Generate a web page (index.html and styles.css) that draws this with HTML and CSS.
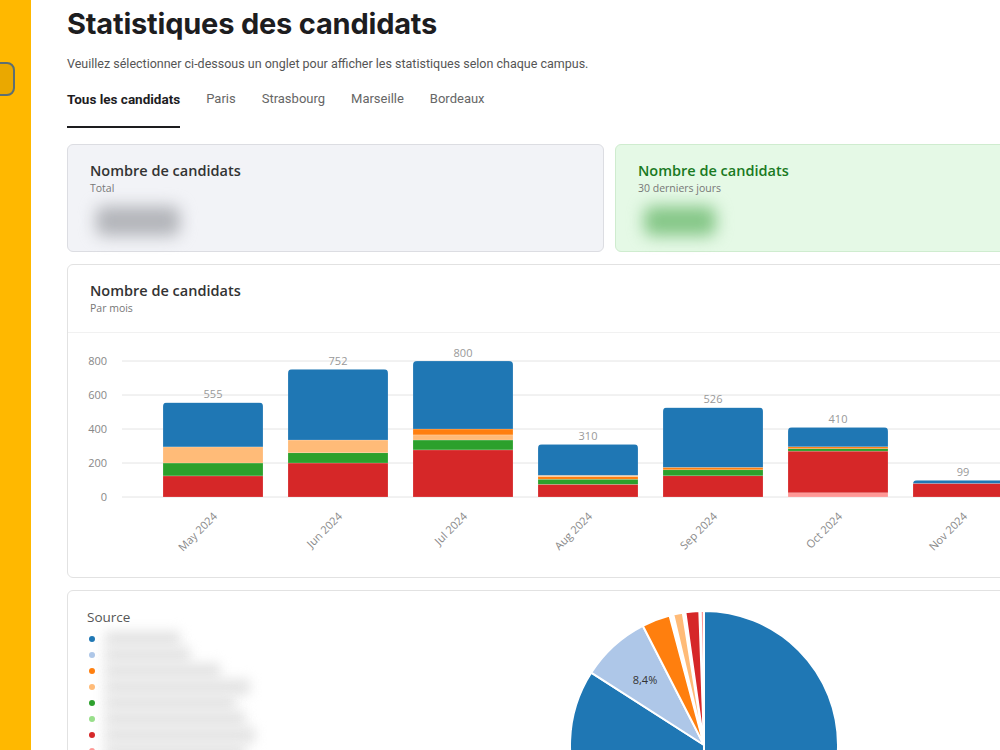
FILE: index.html
```html
<!DOCTYPE html>
<html lang="fr">
<head>
<meta charset="utf-8">
<title>Statistiques des candidats</title>
<link rel="stylesheet" href="styles.css">
</head>
<body>
<div class="layout">
  <aside class="sidebar">
    <div class="sidebar-toggle"></div>
  </aside>

  <main class="main">
    <h1 class="page-title">Statistiques des candidats</h1>
    <p class="page-intro">Veuillez sélectionner ci-dessous un onglet pour afficher les statistiques selon chaque campus.</p>

    <nav class="tabs">
      <span class="tab tab-active">Tous les candidats</span>
      <span class="tab">Paris</span>
      <span class="tab">Strasbourg</span>
      <span class="tab">Marseille</span>
      <span class="tab">Bordeaux</span>
    </nav>

    <section class="stat-row">
      <div class="stat-card">
        <div class="card-title">Nombre de candidats</div>
        <div class="card-sub">Total</div>
        <div class="stat-value"><span class="redacted"></span></div>
      </div>
      <div class="stat-card stat-card-green">
        <div class="card-title">Nombre de candidats</div>
        <div class="card-sub">30 derniers jours</div>
        <div class="stat-value"><span class="redacted"></span></div>
      </div>
    </section>

    <section class="panel">
      <header class="panel-head">
        <div class="card-title">Nombre de candidats</div>
        <div class="card-sub">Par mois</div>
      </header>
      <div class="chart-wrap">
        <svg class="bar-chart" width="1085" height="228" viewBox="0 0 1085 228">
          <defs>
            <clipPath id="b0"><rect x="95" y="54.6" width="100" height="100" rx="4"/></clipPath>
            <clipPath id="b1"><rect x="220" y="21.2" width="100" height="140" rx="4"/></clipPath>
            <clipPath id="b2"><rect x="345" y="13" width="100" height="140" rx="4"/></clipPath>
            <clipPath id="b3"><rect x="470" y="96.3" width="100" height="60" rx="4"/></clipPath>
            <clipPath id="b4"><rect x="595" y="59.6" width="100" height="100" rx="4"/></clipPath>
            <clipPath id="b5"><rect x="720" y="79.3" width="100" height="80" rx="4"/></clipPath>
            <clipPath id="b6"><rect x="845" y="132.2" width="100" height="30" rx="4"/></clipPath>
          </defs>

          <!-- grid -->
          <g class="grid">
            <line x1="54" y1="13" x2="1085" y2="13"/>
            <line x1="54" y1="47" x2="1085" y2="47"/>
            <line x1="54" y1="81" x2="1085" y2="81"/>
            <line x1="54" y1="115" x2="1085" y2="115"/>
            <line x1="54" y1="149" x2="1085" y2="149"/>
          </g>
          <g class="axis-y">
            <text x="39" y="17">800</text>
            <text x="39" y="51">600</text>
            <text x="39" y="85">400</text>
            <text x="39" y="119">200</text>
            <text x="39" y="153">0</text>
          </g>

          <!-- May -->
          <g clip-path="url(#b0)" class="stack">
            <rect x="95" y="127.9" width="100" height="21.1" fill="#d62728"/>
            <rect x="95" y="115" width="100" height="12.9" fill="#2ca02c"/>
            <rect x="95" y="98.9" width="100" height="16.1" fill="#ffbb78"/>
            <rect x="95" y="54.6" width="100" height="44.3" fill="#1f77b4"/>
          </g>
          <!-- Jun -->
          <g clip-path="url(#b1)" class="stack">
            <rect x="220" y="115" width="100" height="34" fill="#d62728"/>
            <rect x="220" y="104.8" width="100" height="10.2" fill="#2ca02c"/>
            <rect x="220" y="92" width="100" height="12.8" fill="#ffbb78"/>
            <rect x="220" y="21.2" width="100" height="70.8" fill="#1f77b4"/>
          </g>
          <!-- Jul -->
          <g clip-path="url(#b2)" class="stack">
            <rect x="345" y="101.9" width="100" height="47.1" fill="#d62728"/>
            <rect x="345" y="92" width="100" height="9.9" fill="#2ca02c"/>
            <rect x="345" y="86.9" width="100" height="5.1" fill="#ffbb78"/>
            <rect x="345" y="81" width="100" height="5.9" fill="#ff7f0e"/>
            <rect x="345" y="13" width="100" height="68" fill="#1f77b4"/>
          </g>
          <!-- Aug -->
          <g clip-path="url(#b3)" class="stack">
            <rect x="470" y="136.3" width="100" height="12.7" fill="#d62728"/>
            <rect x="470" y="131.2" width="100" height="5.1" fill="#2ca02c"/>
            <rect x="470" y="128.6" width="100" height="2.6" fill="#ff7f0e"/>
            <rect x="470" y="127.3" width="100" height="1.3" fill="#ffbb78"/>
            <rect x="470" y="96.3" width="100" height="31" fill="#1f77b4"/>
          </g>
          <!-- Sep -->
          <g clip-path="url(#b4)" class="stack">
            <rect x="595" y="127.8" width="100" height="21.2" fill="#d62728"/>
            <rect x="595" y="121.8" width="100" height="6" fill="#2ca02c"/>
            <rect x="595" y="119.3" width="100" height="2.5" fill="#ff7f0e"/>
            <rect x="595" y="59.6" width="100" height="59.7" fill="#1f77b4"/>
          </g>
          <!-- Oct -->
          <g clip-path="url(#b5)" class="stack">
            <rect x="720" y="144.8" width="100" height="4.2" fill="#ff9896"/>
            <rect x="720" y="103.1" width="100" height="41.7" fill="#d62728"/>
            <rect x="720" y="100.6" width="100" height="2.5" fill="#2ca02c"/>
            <rect x="720" y="98.8" width="100" height="1.8" fill="#ff7f0e"/>
            <rect x="720" y="79.3" width="100" height="19.5" fill="#1f77b4"/>
          </g>
          <!-- Nov -->
          <g clip-path="url(#b6)" class="stack">
            <rect x="845" y="135.4" width="100" height="13.6" fill="#d62728"/>
            <rect x="845" y="132.2" width="100" height="3.2" fill="#1f77b4"/>
          </g>

          <!-- totals -->
          <g class="totals">
            <text x="145" y="50">555</text>
            <text x="270" y="16.6">752</text>
            <text x="395" y="9">800</text>
            <text x="520" y="91.7">310</text>
            <text x="645" y="55">526</text>
            <text x="770" y="74.7">410</text>
            <text x="895" y="127.6">99</text>
          </g>

          <!-- month labels -->
          <g class="axis-x">
            <text transform="translate(150 169) rotate(-45)">May 2024</text>
            <text transform="translate(275 169) rotate(-45)">Jun 2024</text>
            <text transform="translate(400 169) rotate(-45)">Jul 2024</text>
            <text transform="translate(525 169) rotate(-45)">Aug 2024</text>
            <text transform="translate(650 169) rotate(-45)">Sep 2024</text>
            <text transform="translate(775 169) rotate(-45)">Oct 2024</text>
            <text transform="translate(900 169) rotate(-45)">Nov 2024</text>
          </g>
        </svg>
      </div>
    </section>

    <section class="panel source-panel">
      <div class="source-legend">
        <div class="source-title">Source</div>
        <ul class="legend">
          <li><span class="dot" style="background:#1f77b4"></span><span class="redacted-line" style="width:75px"></span></li>
          <li><span class="dot" style="background:#aec7e8"></span><span class="redacted-line" style="width:85px"></span></li>
          <li><span class="dot" style="background:#ff7f0e"></span><span class="redacted-line" style="width:115px"></span></li>
          <li><span class="dot" style="background:#ffbb78"></span><span class="redacted-line" style="width:145px"></span></li>
          <li><span class="dot" style="background:#2ca02c"></span><span class="redacted-line" style="width:130px"></span></li>
          <li><span class="dot" style="background:#98df8a"></span><span class="redacted-line" style="width:140px"></span></li>
          <li><span class="dot" style="background:#d62728"></span><span class="redacted-line" style="width:150px"></span></li>
          <li><span class="dot" style="background:#ff9896"></span><span class="redacted-line" style="width:140px"></span></li>
        </ul>
      </div>
      <svg class="pie" width="300" height="300" viewBox="-150 -150 300 300">
        <g class="slices">
          <!-- angles clockwise from 12 o'clock, r = 134 -->
          <path d="M0 0 L0 -134 A134 134 0 0 1 0 134 Z" fill="#1f77b4"/>
          <path d="M0 0 L0 134 A134 134 0 0 1 -112.8 -72.3 Z" fill="#1f77b4"/>
          <path d="M0 0 L-112.8 -72.3 A134 134 0 0 1 -61.2 -119.2 Z" fill="#aec7e8"/>
          <path d="M0 0 L-61.2 -119.2 A134 134 0 0 1 -34.5 -129.5 Z" fill="#ff7f0e"/>
          <path d="M0 0 L-30.7 -130.4 A134 134 0 0 1 -21.3 -132.3 Z" fill="#ffbb78"/>
          <path d="M0 0 L-18.6 -132.7 A134 134 0 0 1 -4.7 -133.9 Z" fill="#d62728"/>
          <path d="M0 0 L-3.3 -133.96 A134 134 0 0 1 0 -134 Z" fill="#ff9896"/>
        </g>
        <text class="pie-label" x="-59" y="-61">8,4%</text>
      </svg>
    </section>
  </main>
</div>
</body>
</html>
```
FILE: styles.css
```css
* {
  box-sizing: border-box;
}

html,
body {
  margin: 0;
  padding: 0;
  width: 1000px;
  height: 750px;
  overflow: hidden;
  background: #ffffff;
}

body {
  font-family: "Open Sans", "Liberation Sans", sans-serif;
  color: #333333;
}

.layout {
  display: flex;
  width: 1200px;
  min-height: 750px;
}

/* yellow navigation rail */
.sidebar {
  flex: 0 0 31px;
  background: #ffb800;
  padding-top: 62px;
}

.sidebar-toggle {
  width: 36px;
  height: 34px;
  margin-left: -21px;
  background: #eaa800;
  border: 2px solid #5d6f72;
  border-radius: 8px;
}

.main {
  flex: 0 0 1121px;
  padding: 5px 0 0 36px;
}

.page-title {
  margin: 0;
  font-family: Inter, "Liberation Sans", sans-serif;
  font-size: 29px;
  line-height: 38px;
  font-weight: 700;
  color: #1d1d1f;
  letter-spacing: -0.2px;
}

.page-intro {
  margin: 12px 0 0;
  font-family: Roboto, "Liberation Sans", sans-serif;
  font-size: 12.5px;
  line-height: 18px;
  color: #555555;
}

.tabs {
  display: flex;
  gap: 26px;
  margin-top: 17px;
}

.tab {
  font-family: Roboto, "Liberation Sans", sans-serif;
  font-size: 13px;
  line-height: 18px;
  color: #666666;
  padding-bottom: 18px;
  border-bottom: 2px solid transparent;
}

.tab-active {
  color: #1d1d1f;
  font-size: 13.5px;
  font-weight: 700;
  border-bottom-color: #1d1d1f;
}

/* summary cards */
.stat-row {
  display: grid;
  grid-template-columns: 537px 537px;
  gap: 11px;
  margin-top: 16px;
}

.stat-card {
  height: 108px;
  background: #f2f3f7;
  border: 1px solid #dcdde2;
  border-radius: 6px;
  padding: 16px 22px 0;
}

.stat-card-green {
  background: #e5f9e6;
  border-color: #cfeccf;
}

.card-title {
  font-size: 14.5px;
  line-height: 20px;
  font-weight: 600;
  color: #333333;
}

.stat-card-green .card-title {
  color: #1a7a1f;
}

.card-sub {
  font-size: 10.5px;
  line-height: 14px;
  color: #777777;
}

.stat-value {
  margin-top: 5px;
  height: 42px;
  display: flex;
  align-items: center;
}

.redacted {
  display: block;
  width: 84px;
  height: 30px;
  margin-left: 6px;
  background: #b3b5ba;
  border-radius: 8px;
  filter: blur(8px);
}

.stat-card-green .redacted {
  width: 72px;
  background: #86c788;
}

/* white panels */
.panel {
  margin-top: 12px;
  background: #ffffff;
  border: 1px solid #e2e2e2;
  border-radius: 6px;
  overflow: hidden;
}

.panel-head {
  padding: 16px 22px 17px;
  border-bottom: 1px solid #f1f1f1;
}

.chart-wrap {
  padding-top: 15px;
  height: 244px;
}

.bar-chart {
  display: block;
}

.grid line {
  stroke: #e4e4e4;
  stroke-width: 1;
}

.axis-y text {
  font-size: 11px;
  fill: #888888;
  text-anchor: end;
}

.stack rect {
  stroke: rgba(255, 255, 255, 0.35);
  stroke-width: 0.5;
}

.totals text {
  font-size: 11px;
  fill: #999999;
  text-anchor: middle;
}

.axis-x text {
  font-size: 11px;
  fill: #888888;
  text-anchor: end;
}

/* source breakdown */
.source-panel {
  display: flex;
  height: 200px;
}

.source-legend {
  flex: 0 0 486px;
  padding: 16px 19px;
}

.source-title {
  font-size: 13.5px;
  line-height: 20px;
  color: #555555;
}

.legend {
  list-style: none;
  margin: 4px 0 0;
  padding: 0;
}

.legend li {
  display: flex;
  align-items: center;
  height: 16px;
}

.dot {
  width: 6px;
  height: 6px;
  border-radius: 50%;
  margin-left: 2px;
  margin-right: 10px;
}

.redacted-line {
  display: block;
  height: 16px;
  background: #e4e4e4;
  filter: blur(6px);
}

.pie {
  display: block;
  margin-top: 4px;
}

.slices path {
  stroke: #ffffff;
  stroke-width: 2;
  stroke-linejoin: round;
}

.pie-label {
  font-size: 11px;
  fill: #333333;
  text-anchor: middle;
}
```
